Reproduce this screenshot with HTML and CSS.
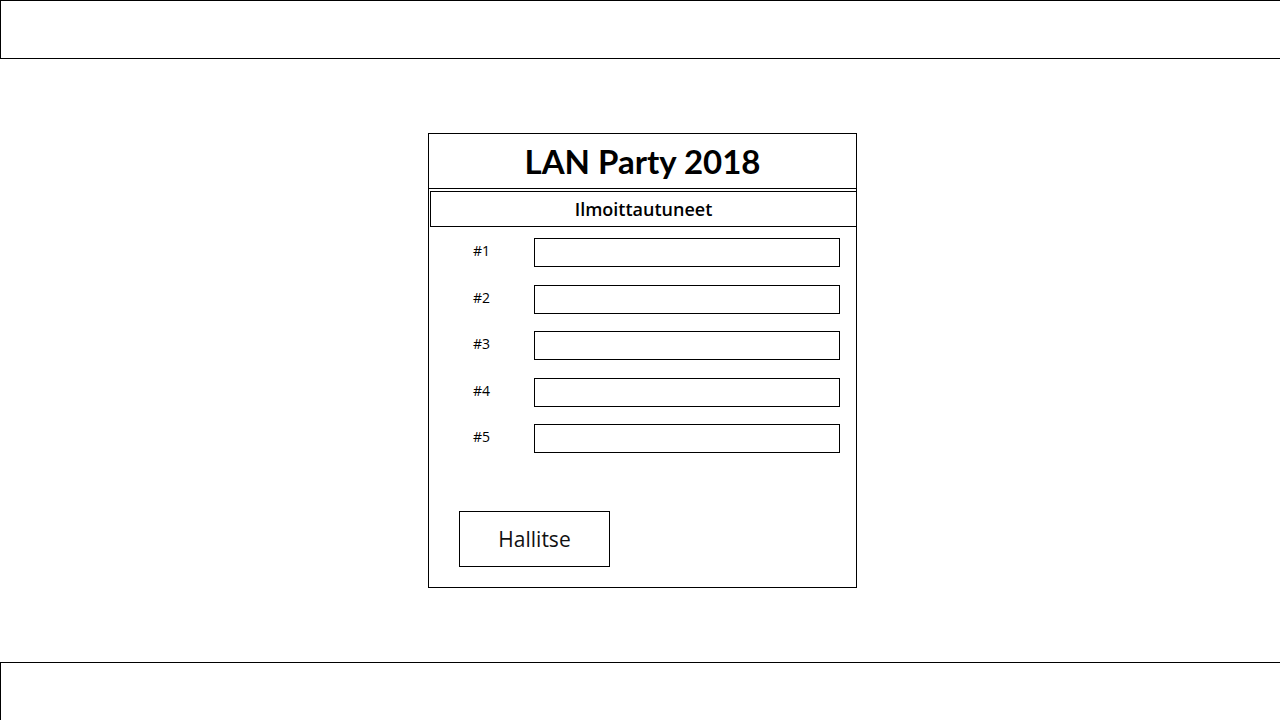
FILE: index.html
```html
<!DOCTYPE html>
<html>
<head>
<meta charset="utf-8">
<link rel="stylesheet" href="styles.css">
</head>
<body>
<div class="page">
  <header class="topbar"></header>
  <main class="card">
    <h1 class="card-title">LAN Party 2018</h1>
    <h2 class="card-sub">Ilmoittautuneet</h2>
    <div class="rows">
      <div class="row"><span class="label">#1</span><div class="field"></div></div>
      <div class="row"><span class="label">#2</span><div class="field"></div></div>
      <div class="row"><span class="label">#3</span><div class="field"></div></div>
      <div class="row"><span class="label">#4</span><div class="field"></div></div>
      <div class="row"><span class="label">#5</span><div class="field"></div></div>
    </div>
    <div class="actions"><button class="btn">Hallitse</button></div>
  </main>
  <footer class="bottombar"></footer>
</div>
</body>
</html>
```
FILE: styles.css
```css
html, body {
  margin: 0;
  padding: 0;
  background: #fff;
  overflow: hidden;
}
.page {
  width: 1280px;
  height: 720px;
  overflow: hidden;
  display: flex;
  flex-direction: column;
  font-family: "Open Sans", "DejaVu Sans", sans-serif;
  color: #000;
}
.topbar {
  flex: none;
  height: 57px;
  width: 1290px;
  border: 1px solid #000;
  box-sizing: content-box;
}
.card {
  flex: none;
  margin: 74px 0 0 428px;
  width: 427px;
  height: 453px;
  border: 1px solid #000;
  display: flex;
  flex-direction: column;
}
.card-title {
  margin: 0;
  height: 54px;
  border-bottom: 1px solid #000;
  display: flex;
  align-items: center;
  justify-content: center;
  font-family: Lato, "Open Sans", sans-serif;
  font-weight: 700;
  font-size: 33px;
  line-height: 1;
}
.card-sub {
  margin: 2px -1px 0 1px;
  height: 34px;
  border: 1px solid #000;
  display: flex;
  align-items: center;
  justify-content: center;
  font-family: "Open Sans", sans-serif;
  font-weight: 600;
  font-size: 18px;
  line-height: 1;
}
.rows {
  padding-top: 11px;
  display: flex;
  flex-direction: column;
}
.row {
  height: 46.5px;
  display: flex;
  align-items: flex-start;
}
.label {
  flex: none;
  width: 105px;
  text-align: center;
  font-size: 14px;
  line-height: 18px;
  padding-top: 4px;
}
.field {
  flex: none;
  width: 304px;
  height: 27px;
  border: 1px solid #000;
}
.actions {
  margin-top: 40px;
  padding-left: 30px;
}
.btn {
  width: 151px;
  height: 56px;
  border: 1px solid #000;
  background: #fff;
  font-family: "Open Sans", sans-serif;
  font-size: 21px;
  color: #111;
  padding: 0;
  display: flex;
  align-items: center;
  justify-content: center;
}
.bottombar {
  flex: none;
  margin-top: 74px;
  width: 1290px;
  height: 100px;
  border: 1px solid #000;
}
```
